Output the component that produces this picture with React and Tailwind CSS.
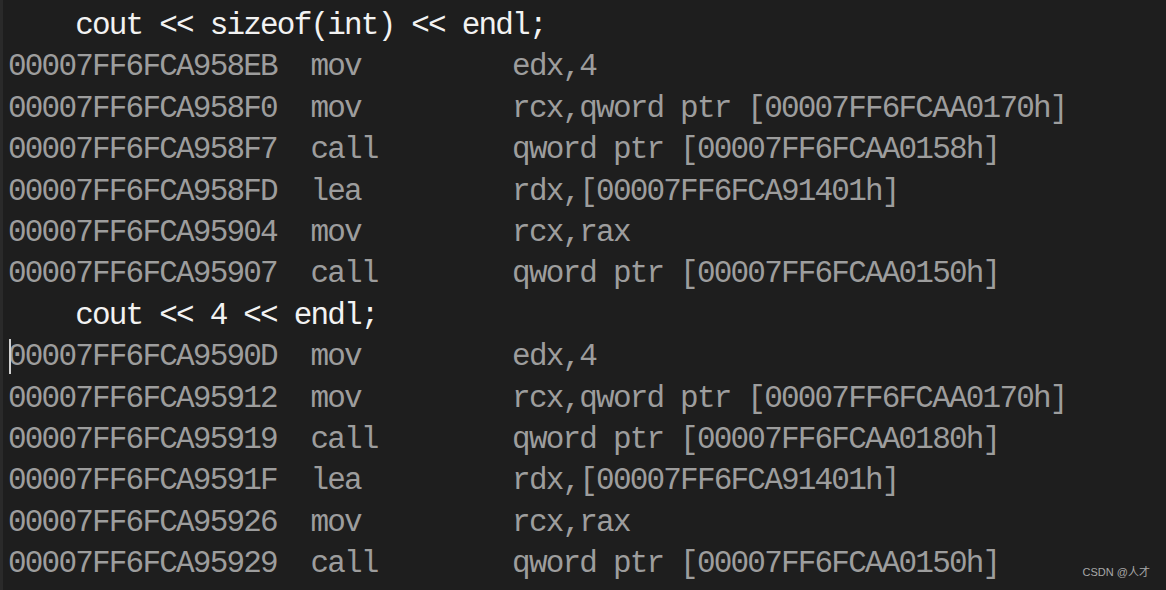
import React from "react";

const rows = [
  { src: "    cout << sizeof(int) << endl;" },
  { addr: "00007FF6FCA958EB", op: "mov", args: "edx,4" },
  { addr: "00007FF6FCA958F0", op: "mov", args: "rcx,qword ptr [00007FF6FCAA0170h]" },
  { addr: "00007FF6FCA958F7", op: "call", args: "qword ptr [00007FF6FCAA0158h]" },
  { addr: "00007FF6FCA958FD", op: "lea", args: "rdx,[00007FF6FCA91401h]" },
  { addr: "00007FF6FCA95904", op: "mov", args: "rcx,rax" },
  { addr: "00007FF6FCA95907", op: "call", args: "qword ptr [00007FF6FCAA0150h]" },
  { src: "    cout << 4 << endl;" },
  { addr: "00007FF6FCA9590D", op: "mov", args: "edx,4", caret: true },
  { addr: "00007FF6FCA95912", op: "mov", args: "rcx,qword ptr [00007FF6FCAA0170h]" },
  { addr: "00007FF6FCA95919", op: "call", args: "qword ptr [00007FF6FCAA0180h]" },
  { addr: "00007FF6FCA9591F", op: "lea", args: "rdx,[00007FF6FCA91401h]" },
  { addr: "00007FF6FCA95926", op: "mov", args: "rcx,rax" },
  { addr: "00007FF6FCA95929", op: "call", args: "qword ptr [00007FF6FCAA0150h]" },
];

const pad = (s, n) => s + " ".repeat(Math.max(0, n - s.length));

export default function App() {
  return (
    <div className="relative w-[1166px] h-[590px] overflow-hidden bg-[#1e1e1e] border-l-[3px] border-[#2a2a2a]">
      <div className="pt-[5px] pl-[5px] font-['Liberation_Mono',monospace] text-[31px] tracking-[-1.8px] leading-[41.4px] whitespace-pre">
        {rows.map((r, i) =>
          r.src ? (
            <div key={i} className="text-[#f2f2f2]">
              {r.src}
            </div>
          ) : (
            <div key={i} className="relative text-[#9d9d9d]">
              {r.caret && (
                <span className="absolute left-[1px] top-[3px] w-[2px] h-[35px] bg-[#d0d0d0]" />
              )}
              {pad(r.addr, 18) + pad(r.op, 12) + r.args}
            </div>
          )
        )}
      </div>
      <div className="absolute right-[16px] bottom-[10px] text-[11px] text-[#a8a8a8] font-['Liberation_Sans','Noto_Sans_CJK_SC',sans-serif]">
        CSDN @人才
      </div>
    </div>
  );
}
